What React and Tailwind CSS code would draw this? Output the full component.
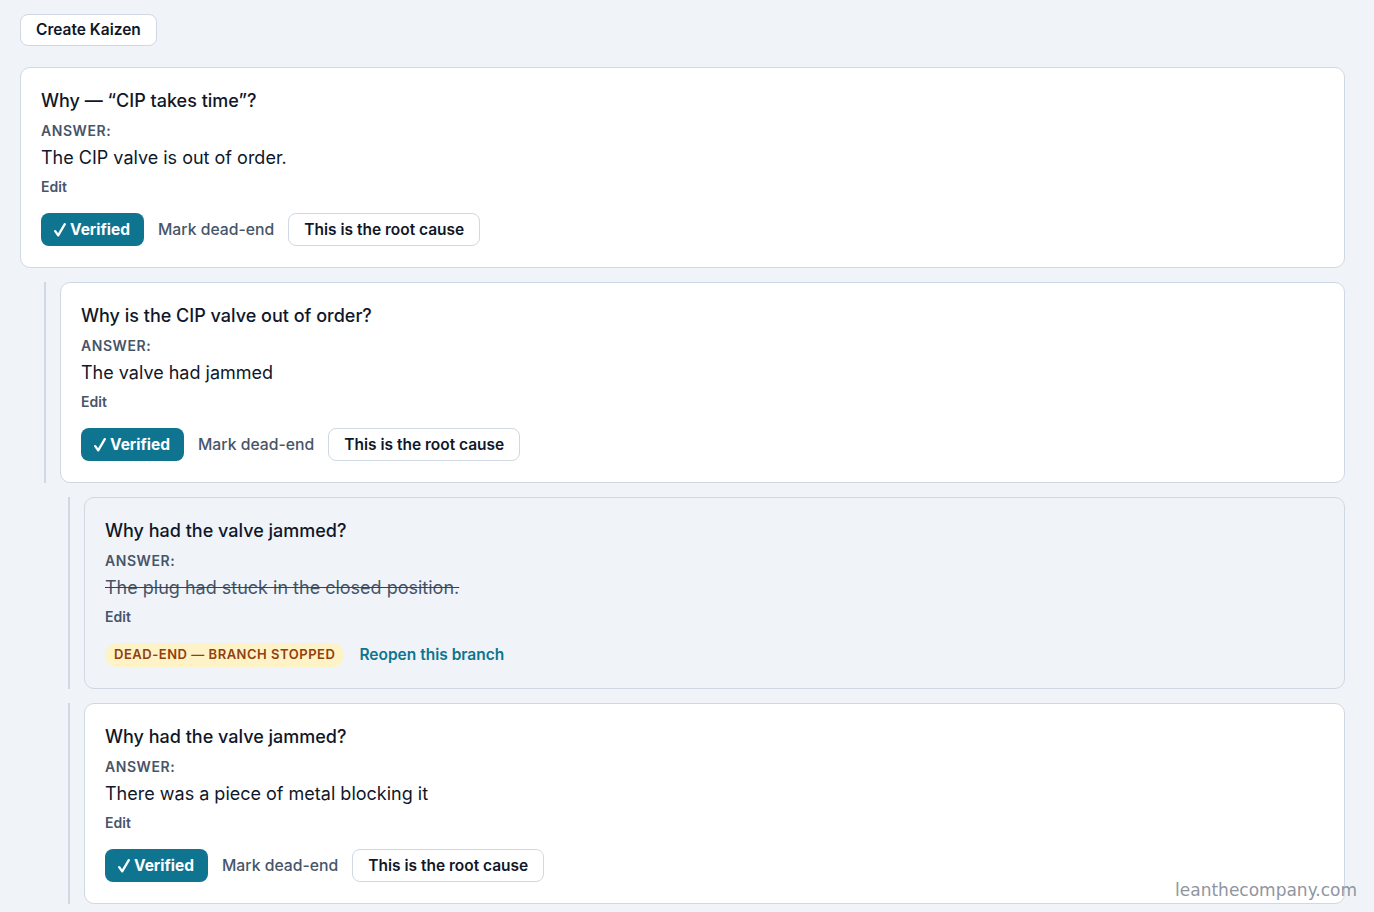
import React from "react";

const steps = [
  {
    depth: 0,
    question: "Why — \u201CCIP takes time\u201D?",
    answer: "The CIP valve is out of order.",
    status: "verified",
  },
  {
    depth: 1,
    question: "Why is the CIP valve out of order?",
    answer: "The valve had jammed",
    status: "verified",
  },
  {
    depth: 2,
    question: "Why had the valve jammed?",
    answer: "The plug had stuck in the closed position.",
    status: "dead",
  },
  {
    depth: 2,
    question: "Why had the valve jammed?",
    answer: "There was a piece of metal blocking it",
    status: "verified",
  },
];

function Check() {
  return (
    <svg width="12" height="14" viewBox="0 0 12 14" className="mr-[4px] mt-[1px]" aria-hidden="true">
      <path d="M1.2 8.2 L4.2 12.4 L10.8 1.2" fill="none" stroke="white" strokeWidth="2.3" strokeLinecap="round" strokeLinejoin="round" />
    </svg>
  );
}

function Card({ step }) {
  const dead = step.status === "dead";
  return (
    <div
      className={`rounded-[10px] border border-[#cfd8e3] px-5 pt-[19px] pb-[21px] ${
        dead ? "bg-[#f0f4f9]" : "bg-white"
      }`}
    >
      <div className="text-[18px] leading-[27px] font-medium text-[#0f172a]">{step.question}</div>
      <div className="mt-[8px] text-[14px] leading-[18px] font-semibold tracking-[0.04em] text-[#475569]">
        ANSWER:
      </div>
      <div
        className={`mt-[4px] text-[18px] leading-[27px] ${
          dead ? "text-[#475569] line-through decoration-[#334155]" : "text-[#0f172a]"
        }`}
      >
        {step.answer}
      </div>
      <div className="mt-[7px] text-[14px] leading-[18px] font-semibold text-[#475569]">Edit</div>
      {dead ? (
        <div className="mt-[17px] flex items-center gap-[15px] h-[24px]">
          <span className="inline-flex items-center h-[24px] px-[9px] rounded-full bg-[#fef3c7] text-[#92400e] text-[13px] font-semibold tracking-[0.04em]">
            DEAD-END — BRANCH STOPPED
          </span>
          <span className="text-[15.5px] font-semibold text-[#0e7490]">Reopen this branch</span>
        </div>
      ) : (
        <div className="mt-[17px] flex items-center gap-[14px]">
          <button className="h-[33px] pl-[13px] pr-[14px] rounded-lg bg-[#0e7490] text-white text-[15.5px] font-bold flex items-center">
            <Check />
            Verified
          </button>
          <span className="text-[15.75px] font-medium text-[#475569]">Mark dead-end</span>
          <button className="h-[33px] px-[15px] rounded-lg border border-[#cfd8e3] bg-white text-[15.5px] font-semibold text-[#0f172a]">
            This is the root cause
          </button>
        </div>
      )}
    </div>
  );
}

function Row({ step }) {
  if (step.depth === 0) return <Card step={step} />;
  const indent = step.depth === 1 ? "ml-6" : "ml-12";
  return (
    <div className={`${indent} border-l-2 border-[#cfd8e3] pl-[14px]`}>
      <Card step={step} />
    </div>
  );
}

export default function App() {
  return (
    <div
      className="relative min-h-[912px] bg-[#f0f4f9] pl-5 pr-[29px] pt-[14px] pb-10"
      style={{ fontFamily: "Inter, 'Noto Sans', sans-serif" }}
    >
      <button className="h-8 px-[15px] rounded-lg border border-[#cfd8e3] bg-white text-[15.5px] font-semibold text-[#0f172a]">
        Create Kaizen
      </button>
      <div className="mt-[21px] flex flex-col gap-[14px]">
        {steps.map((s, i) => (
          <Row key={i} step={s} />
        ))}
      </div>
      <div
        className="absolute right-[17px] top-[878px] text-[17px] leading-[24px] text-[#8f96a0]"
        style={{ fontFamily: "'DejaVu Sans', sans-serif" }}
      >
        leanthecompany.com
      </div>
    </div>
  );
}
